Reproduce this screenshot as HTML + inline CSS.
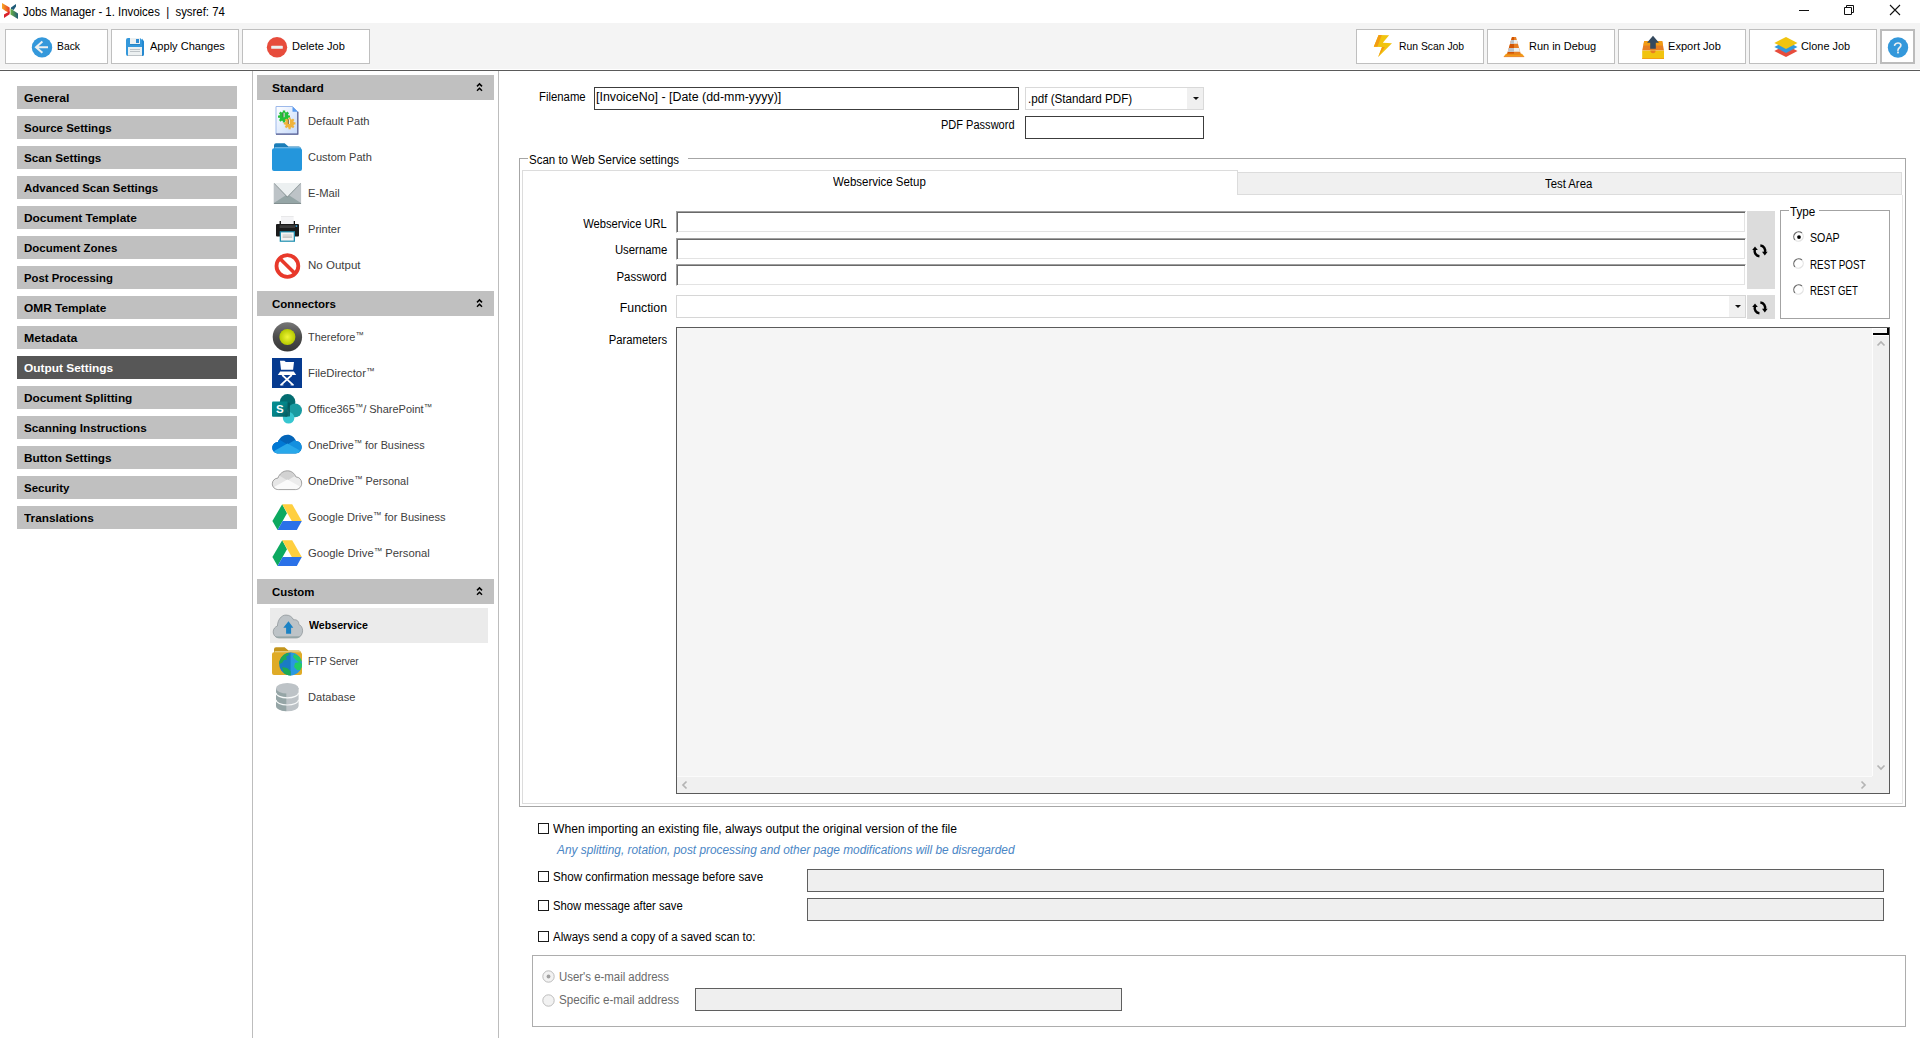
<!DOCTYPE html>
<html lang="en"><head><meta charset="utf-8"><title>Jobs Manager - 1. Invoices | sysref: 74</title>
<style>
html,body{margin:0;padding:0;background:#fff;}
body{width:1920px;height:1040px;position:relative;overflow:hidden;font-family:"Liberation Sans",sans-serif;font-size:11.5px;}
div,svg,span.t{position:absolute;box-sizing:border-box;}
span.t{white-space:pre;line-height:16px;}
svg{overflow:visible;}
span.tm{font-size:0.76em;vertical-align:0.36em;line-height:0;}
</style></head>
<body>
<div style="left:0px;top:23px;width:1920px;height:46px;background:#f4f4f4;"></div>
<div style="left:0px;top:70px;width:1920px;height:1px;background:#5a5a5a;"></div>
<svg style="left:2px;top:3px;width:17px;height:16px" viewBox="0 0 17 16">
<defs><linearGradient id="ga1" x1="0" x2="1" y1="0" y2="0"><stop offset="0" stop-color="#f9a825"/><stop offset="1" stop-color="#e53a24"/></linearGradient>
<linearGradient id="ga2" x1="0" x2="1" y1="0" y2="0"><stop offset="0" stop-color="#6ab344"/><stop offset="1" stop-color="#1f5a73"/></linearGradient></defs>
<polygon points="0,0 7.6,4.5 7.6,10 3.5,8 0,5.5" fill="url(#ga1)"/>
<polygon points="2,11.5 7.6,8.2 7.6,11.2 2,15" fill="#d9202a"/>
<polygon points="9,4.6 14,1 14,3.6 11.6,7 9,6" fill="#1d5a78"/>
<polygon points="8.5,5.5 16,10.5 16,16 8.5,11.5" fill="url(#ga2)"/>
</svg>
<span id="t0" class="t" style="top:4px;font-size:12px;left:22.86px;transform:scaleX(0.9497);transform-origin:0 50%;">Jobs Manager - 1. Invoices  |  sysref: 74</span>
<svg style="left:1790px;top:0px;width:120px;height:22px" viewBox="0 0 120 22">
<path d="M9 10.5H19" stroke="#111" stroke-width="1" fill="none"/>
<path d="M54.5 7.5h7v7h-7z M56.5 7.5v-2h7v7h-2" stroke="#111" stroke-width="1" fill="none"/>
<path d="M100 5l10 10M110 5l-10 10" stroke="#111" stroke-width="1.1" fill="none"/>
</svg>
<div style="left:5px;top:29px;width:103px;height:35px;background:#fff;border:1px solid #bfbfbf;"></div>
<svg style="left:32px;top:37px;width:20px;height:21px" viewBox="0 0 20 21">
<circle cx="10" cy="10.4" r="10.2" fill="#3498db"/>
<path d="M16 10.2H4.2M10.4 4.6L4 10.2l6.4 5.6" stroke="#ecf0f1" stroke-width="2" fill="none" stroke-linejoin="miter"/>
</svg>
<span id="t1" class="t" style="top:38px;left:56.54px;transform:scaleX(0.8988);transform-origin:0 50%;">Back</span>
<div style="left:111px;top:29px;width:128px;height:35px;background:#fff;border:1px solid #bfbfbf;"></div>
<svg style="left:126px;top:38px;width:18px;height:18px" viewBox="0 0 18 18">
<path d="M2 0H14L18 3.6V16a2 2 0 0 1-2 2H2a2 2 0 0 1-2-2V2a2 2 0 0 1 2-2z" fill="#3498db"/>
<path d="M16 0.5L18 3.6V16a2 2 0 0 1-2 2z" fill="#2488d0"/>
<rect x="4" y="0" width="10" height="6" fill="#ecf0f1"/>
<rect x="4" y="6" width="10" height="0.8" fill="#2a80b9"/>
<rect x="10" y="1" width="3" height="4" fill="#2e8bd2"/>
<rect x="2" y="9" width="14" height="9" fill="#ecf0f1"/>
<rect x="2" y="17" width="14" height="1" fill="#bdc3c7"/>
<rect x="4" y="11" width="10" height="1" fill="#bdc3c7"/>
<rect x="4" y="13" width="10" height="1" fill="#bdc3c7"/>
</svg>
<span id="t2" class="t" style="top:38px;left:149.86px;transform:scaleX(0.9601);transform-origin:0 50%;">Apply Changes</span>
<div style="left:242px;top:29px;width:128px;height:35px;background:#fff;border:1px solid #bfbfbf;"></div>
<svg style="left:267px;top:37px;width:20px;height:21px" viewBox="0 0 20 21">
<circle cx="10" cy="10.3" r="10.2" fill="#e74c3c"/>
<rect x="4.2" y="8.8" width="11.6" height="3" rx="0.6" fill="#ecf0f1"/>
</svg>
<span id="t3" class="t" style="top:38px;left:291.88px;transform:scaleX(0.9598);transform-origin:0 50%;">Delete Job</span>
<div style="left:1356px;top:29px;width:128px;height:35px;background:#fff;border:1px solid #bfbfbf;"></div>
<svg style="left:1373px;top:35px;width:19px;height:22px" viewBox="0 0 19 22">
<polygon points="5.6,0.1 16.1,0.2 9.8,7.8 19,8.2 5.2,22.1 9,11.9 0.8,11.8" fill="#f1c40f"/>
<polygon points="5.6,0.1 8.8,0.1 4.4,11.8 0.8,11.8" fill="#f39c12"/>
<polygon points="9,11.9 11.8,11.9 5.2,22.1" fill="#f39c12"/>
</svg>
<span id="t4" class="t" style="top:38px;left:1398.73px;transform:scaleX(0.9010);transform-origin:0 50%;">Run Scan Job</span>
<div style="left:1487px;top:29px;width:128px;height:35px;background:#fff;border:1px solid #bfbfbf;"></div>
<svg style="left:1503px;top:36px;width:22px;height:22px" viewBox="0 0 22 22">
<polygon points="9,0.9 13,0.9 18,18.8 4,18.8" fill="#e67e22"/>
<polygon points="9,0.9 11,0.9 11,18.8 4,18.8" fill="#d35400"/>
<polygon points="8.1,4 13.9,4 14.9,7.8 7.1,7.8" fill="#ecf0f1"/>
<polygon points="8.1,4 11,4 11,7.8 7.1,7.8" fill="#bdc3c7"/>
<polygon points="5.9,12 16.1,12 17.1,15.8 4.9,15.8" fill="#ecf0f1"/>
<polygon points="5.9,12 11,12 11,15.8 4.9,15.8" fill="#bdc3c7"/>
<polygon points="3,17.8 19,17.8 21.2,20.6 0.8,20.6" fill="#f39c12"/>
<polygon points="3.9,17.8 18.1,17.8 17.9,18.8 4.1,18.8" fill="#e67e22"/>
<rect x="0.8" y="20.2" width="20.4" height="0.9" fill="#e67e22"/>
</svg>
<span id="t5" class="t" style="top:38px;left:1528.88px;transform:scaleX(0.9541);transform-origin:0 50%;">Run in Debug</span>
<div style="left:1618px;top:29px;width:128px;height:35px;background:#fff;border:1px solid #bfbfbf;"></div>
<svg style="left:1641px;top:35px;width:24px;height:24px" viewBox="0 0 24 24">
<polygon points="3.2,5.9 21.2,5.9 23,15.6 1.2,15.6" fill="#e67e22"/>
<polygon points="3.2,5.9 21.2,5.9 22,10.4 2.4,10.4" fill="#f39c12"/>
<rect x="1.2" y="15.6" width="21.8" height="8.3" fill="#f1c40f"/>
<rect x="1.2" y="23" width="21.8" height="0.9" fill="#f39c12"/>
<path d="M9.4 15.6a2.6 2.6 0 0 0 5.2 0z" fill="#e67e22"/>
<polygon points="12,0.7 18,7.8 14.8,7.8 14.8,13.8 9.2,13.8 9.2,7.8 6,7.8" fill="#34495e"/>
</svg>
<span id="t6" class="t" style="top:38px;left:1667.68px;transform:scaleX(0.9616);transform-origin:0 50%;">Export Job</span>
<div style="left:1749px;top:29px;width:128px;height:35px;background:#fff;border:1px solid #bfbfbf;"></div>
<svg style="left:1774px;top:36px;width:24px;height:22px" viewBox="0 0 24 22">
<polygon points="12,9 23.5,15 12,21 0.3,15" fill="#e74c3c"/>
<polygon points="12,4.9 23.5,10.9 12,16.9 0.3,10.9" fill="#3498db"/>
<polygon points="12,0.9 23.5,6.9 12,12.9 0.3,6.9" fill="#f1c40f"/>
</svg>
<span id="t7" class="t" style="top:38px;left:1800.86px;transform:scaleX(0.9478);transform-origin:0 50%;">Clone Job</span>
<div style="left:1880px;top:29px;width:35px;height:35px;background:#fff;border:2px solid #bcbcbc;"></div>
<svg style="left:1888px;top:37px;width:20px;height:21px" viewBox="0 0 20 21">
<circle cx="10" cy="10.5" r="10.2" fill="#3498db"/>
<path d="M6.6 8.1c0.9-2.6 5.6-3 6.3-0.1c0.4 2.2-2.8 3-2.9 5.2" stroke="#ecf0f1" stroke-width="1.7" fill="none" stroke-linecap="round"/>
<rect x="9.1" y="14.5" width="1.8" height="1.9" fill="#ecf0f1"/>
</svg>
<div style="left:17px;top:86px;width:220px;height:23px;background:#c0c0c0;"></div>
<span id="t8" class="t" style="top:90px;font-weight:700;left:23.69px;transform:scaleX(1.0612);transform-origin:0 50%;">General</span>
<div style="left:17px;top:116px;width:220px;height:23px;background:#c0c0c0;"></div>
<span id="t9" class="t" style="top:120px;font-weight:700;left:24.00px;transform:scaleX(1.0000);transform-origin:0 50%;">Source Settings</span>
<div style="left:17px;top:146px;width:220px;height:23px;background:#c0c0c0;"></div>
<span id="t10" class="t" style="top:150px;font-weight:700;left:23.85px;transform:scaleX(1.0172);transform-origin:0 50%;">Scan Settings</span>
<div style="left:17px;top:176px;width:220px;height:23px;background:#c0c0c0;"></div>
<span id="t11" class="t" style="top:180px;font-weight:700;left:24.00px;transform:scaleX(1.0000);transform-origin:0 50%;">Advanced Scan Settings</span>
<div style="left:17px;top:206px;width:220px;height:23px;background:#c0c0c0;"></div>
<span id="t12" class="t" style="top:210px;font-weight:700;left:23.84px;transform:scaleX(1.0350);transform-origin:0 50%;">Document Template</span>
<div style="left:17px;top:236px;width:220px;height:23px;background:#c0c0c0;"></div>
<span id="t13" class="t" style="top:240px;font-weight:700;left:24.00px;transform:scaleX(1.0000);transform-origin:0 50%;">Document Zones</span>
<div style="left:17px;top:266px;width:220px;height:23px;background:#c0c0c0;"></div>
<span id="t14" class="t" style="top:270px;font-weight:700;left:23.85px;transform:scaleX(0.9855);transform-origin:0 50%;">Post Processing</span>
<div style="left:17px;top:296px;width:220px;height:23px;background:#c0c0c0;"></div>
<span id="t15" class="t" style="top:300px;font-weight:700;left:23.84px;transform:scaleX(1.0339);transform-origin:0 50%;">OMR Template</span>
<div style="left:17px;top:326px;width:220px;height:23px;background:#c0c0c0;"></div>
<span id="t16" class="t" style="top:330px;font-weight:700;left:23.84px;transform:scaleX(1.0710);transform-origin:0 50%;">Metadata</span>
<div style="left:17px;top:356px;width:220px;height:23px;background:#575757;"></div>
<span id="t17" class="t" style="top:360px;color:#fff;font-weight:700;left:23.61px;transform:scaleX(1.0346);transform-origin:0 50%;">Output Settings</span>
<div style="left:17px;top:386px;width:220px;height:23px;background:#c0c0c0;"></div>
<span id="t18" class="t" style="top:390px;font-weight:700;left:23.85px;transform:scaleX(1.0277);transform-origin:0 50%;">Document Splitting</span>
<div style="left:17px;top:416px;width:220px;height:23px;background:#c0c0c0;"></div>
<span id="t19" class="t" style="top:420px;font-weight:700;left:23.85px;transform:scaleX(1.0157);transform-origin:0 50%;">Scanning Instructions</span>
<div style="left:17px;top:446px;width:220px;height:23px;background:#c0c0c0;"></div>
<span id="t20" class="t" style="top:450px;font-weight:700;left:23.85px;transform:scaleX(1.0233);transform-origin:0 50%;">Button Settings</span>
<div style="left:17px;top:476px;width:220px;height:23px;background:#c0c0c0;"></div>
<span id="t21" class="t" style="top:480px;font-weight:700;left:24.00px;transform:scaleX(1.0000);transform-origin:0 50%;">Security</span>
<div style="left:17px;top:506px;width:220px;height:23px;background:#c0c0c0;"></div>
<span id="t22" class="t" style="top:510px;font-weight:700;left:23.85px;transform:scaleX(1.0295);transform-origin:0 50%;">Translations</span>
<div style="left:252px;top:71px;width:1px;height:967px;background:#bdbdbd;"></div>
<div style="left:498px;top:71px;width:1px;height:967px;background:#bdbdbd;"></div>
<div style="left:257px;top:75px;width:237px;height:25px;background:#c0c0c0;"></div>
<span id="t23" class="t" style="top:80px;font-weight:700;left:271.84px;transform:scaleX(1.0412);transform-origin:0 50%;">Standard</span>
<svg style="left:476px;top:83px;width:7px;height:9px" viewBox="0 0 7 9">
<path d="M1 3.4L3.5 0.9L6 3.4M1 7.7L3.5 5.2L6 7.7" stroke="#000" stroke-width="1.5" fill="none"/>
</svg>
<div style="left:257px;top:291px;width:237px;height:25px;background:#c0c0c0;"></div>
<span id="t24" class="t" style="top:296px;font-weight:700;left:272.00px;transform:scaleX(1.0000);transform-origin:0 50%;">Connectors</span>
<svg style="left:476px;top:299px;width:7px;height:9px" viewBox="0 0 7 9">
<path d="M1 3.4L3.5 0.9L6 3.4M1 7.7L3.5 5.2L6 7.7" stroke="#000" stroke-width="1.5" fill="none"/>
</svg>
<div style="left:257px;top:579px;width:237px;height:25px;background:#c0c0c0;"></div>
<span id="t25" class="t" style="top:584px;font-weight:700;left:271.85px;transform:scaleX(0.9906);transform-origin:0 50%;">Custom</span>
<svg style="left:476px;top:587px;width:7px;height:9px" viewBox="0 0 7 9">
<path d="M1 3.4L3.5 0.9L6 3.4M1 7.7L3.5 5.2L6 7.7" stroke="#000" stroke-width="1.5" fill="none"/>
</svg>
<svg style="left:275px;top:106px;width:24px;height:29px" viewBox="0 0 24 29">
<defs><linearGradient id="gp" x1="0" y1="0" x2="1" y2="1"><stop offset="0" stop-color="#ffffff"/><stop offset="1" stop-color="#c4d9fb"/></linearGradient></defs>
<path d="M1 0.5H17.5L22.8 5.8V28.2H1z" fill="url(#gp)" stroke="#9db9ea" stroke-width="1"/>
<path d="M22.8 5.8V28.2H1" fill="none" stroke="#5a5f8f" stroke-width="1.2"/>
<path d="M17.5 0.5v5.3h5.3z" fill="#5b9cf0"/>
<circle cx="9" cy="10.6" r="4.6" fill="#22c238"/>
<path d="M9 4.6v12M3 10.6h12M4.8 6.4l8.4 8.4M13.2 6.4l-8.4 8.4" stroke="#22c238" stroke-width="2.4"/>
<circle cx="14.6" cy="17.4" r="4.4" fill="#f0b33c"/>
<path d="M14.6 11.6v11.6M8.8 17.4h11.6M10.5 13.3l8.2 8.2M18.7 13.3l-8.2 8.2" stroke="#f0b33c" stroke-width="2.2"/>
<rect x="8.3" y="6.8" width="1.3" height="4.4" fill="#e8e8e8"/>
<rect x="13.6" y="13.4" width="1.4" height="4.6" fill="#e8e8e8"/>
<rect x="7.6" y="6.8" width="0.8" height="4.4" fill="#4d5a4d"/>
<rect x="12.9" y="13.4" width="0.8" height="4.6" fill="#6b5a3a"/>
</svg>
<span id="t26" class="t" style="top:113px;color:#404040;left:308.12px;transform:scaleX(0.9710);transform-origin:0 50%;">Default Path</span>
<svg style="left:272px;top:143px;width:30px;height:28px" viewBox="0 0 30 28">
<path d="M2 2.2a2 2 0 0 1 2-2h8.6l3.8 3.2h10.4a2 2 0 0 1 2 2v6H2z" fill="#1b7db8"/>
<rect x="2.6" y="4.2" width="25.6" height="2" fill="#7fc0ea"/>
<path d="M0 7.2a2 2 0 0 1 2-2h26a2 2 0 0 1 2 2v18.8a2 2 0 0 1-2 2H2a2 2 0 0 1-2-2z" fill="#2496dc"/>
</svg>
<span id="t27" class="t" style="top:149px;color:#404040;left:308.44px;transform:scaleX(0.9595);transform-origin:0 50%;">Custom Path</span>
<svg style="left:273px;top:182px;width:29px;height:23px" viewBox="0 0 29 23">
<rect x="0.7" y="1.1" width="27.4" height="20.7" rx="1" fill="#bdc3c7"/>
<polygon points="0.9,21 14.4,12.2 27.9,21 27.9,21.8 0.9,21.8" fill="#95a5a6"/>
<polygon points="0.7,1.3 28.1,1.3 14.4,15.4" fill="#7f8c8d"/>
<polygon points="1.2,1.1 27.6,1.1 14.4,14.4" fill="#ecf0f1"/>
<rect x="0.9" y="21" width="27.2" height="0.9" fill="#7f8c8d"/>
</svg>
<span id="t28" class="t" style="top:185px;color:#404040;left:308.10px;transform:scaleX(0.9756);transform-origin:0 50%;">E-Mail</span>
<svg style="left:275px;top:215px;width:24px;height:28px" viewBox="0 0 24 28">
<rect x="6" y="1.2" width="12.6" height="8.5" fill="#f4f4f6"/>
<rect x="6" y="1.2" width="12.6" height="0.7" fill="#e2e2e2"/>
<rect x="4.6" y="6" width="1.3" height="3.5" fill="#111"/>
<rect x="18.7" y="6" width="1.3" height="3.5" fill="#111"/>
<rect x="1" y="9" width="23" height="12.5" rx="1" fill="#1b1b1b"/>
<rect x="4.6" y="10.2" width="15.4" height="2.8" fill="#3b3b3b"/>
<rect x="20.6" y="10.3" width="1.6" height="1.6" fill="#3aa5e0"/>
<rect x="4.7" y="16.2" width="15.3" height="10.6" fill="#1e8fb0"/>
<rect x="6" y="17.4" width="12.7" height="8.2" fill="#f6f4f2"/>
<rect x="7.6" y="19.6" width="9.6" height="0.9" fill="#bdbdbd"/>
<rect x="7.6" y="21.6" width="9.6" height="0.9" fill="#9c9c9c"/>
</svg>
<span id="t29" class="t" style="top:221px;color:#404040;left:308.20px;transform:scaleX(0.9624);transform-origin:0 50%;">Printer</span>
<svg style="left:274px;top:252px;width:27px;height:28px" viewBox="0 0 27 28">
<circle cx="13.4" cy="14" r="10.9" fill="#fff" stroke="#e8392b" stroke-width="3.8"/>
<path d="M5.8 6.4L21 21.6" stroke="#e8392b" stroke-width="3.6"/>
</svg>
<span id="t30" class="t" style="top:257px;color:#404040;left:308.07px;transform:scaleX(1.0020);transform-origin:0 50%;">No Output</span>
<svg style="left:272px;top:322px;width:30px;height:30px" viewBox="0 0 30 30">
<defs><linearGradient id="gt" x1="0" y1="0" x2="0" y2="1"><stop offset="0" stop-color="#777"/><stop offset="0.5" stop-color="#4c4c4c"/><stop offset="1" stop-color="#363636"/></linearGradient>
<radialGradient id="gy" cx="0.5" cy="0.5" r="0.5"><stop offset="0" stop-color="#f0f538"/><stop offset="1" stop-color="#b4c800"/></radialGradient></defs>
<circle cx="15.4" cy="14.9" r="14.7" fill="url(#gt)"/>
<circle cx="15.4" cy="15" r="8" fill="url(#gy)"/>
</svg>
<span id="t31" class="t" style="top:329px;color:#404040;left:308.44px;transform:scaleX(0.9506);transform-origin:0 50%;">Therefore<span class=tm>&#8482;</span></span>
<svg style="left:272px;top:358px;width:30px;height:30px" viewBox="0 0 30 30">
<rect x="0" y="0" width="30" height="30" fill="#063a8f"/>
<path d="M8 2.7h4.4l1.4 1.4H22l-0.9 7.6H9z" fill="#fff"/>
<polygon points="8.2,13.4 21.8,13.4 24.2,16.9 5.8,16.9" fill="#fff"/>
<path d="M10.2 17L21 26.9M19.8 17L9 26.9" stroke="#fff" stroke-width="1.7"/>
<path d="M8 26.9h3.4M18.6 26.9H22" stroke="#fff" stroke-width="1"/>
</svg>
<span id="t32" class="t" style="top:365px;color:#404040;left:308.10px;transform:scaleX(0.9850);transform-origin:0 50%;">FileDirector<span class=tm>&#8482;</span></span>
<svg style="left:272px;top:394px;width:30px;height:30px" viewBox="0 0 30 30">
<defs><linearGradient id="gs" x1="0" y1="0" x2="1" y2="1"><stop offset="0" stop-color="#058f92"/><stop offset="0.5" stop-color="#038387"/><stop offset="1" stop-color="#05575b"/></linearGradient></defs>
<circle cx="15.6" cy="7.9" r="7.8" fill="#036c70"/>
<circle cx="23.1" cy="16.3" r="6.9" fill="#1a9ba1"/>
<circle cx="16.6" cy="23.8" r="5.8" fill="#37c6d0"/>
<rect x="13" y="8.4" width="5" height="14.2" rx="1.2" fill="#04575b" opacity="0.85"/>
<rect x="0" y="7.4" width="15.6" height="15.4" rx="1" fill="url(#gs)"/>
<text x="7.8" y="19.2" font-family="Liberation Sans, sans-serif" font-weight="700" font-size="11.5" fill="#fff" text-anchor="middle">S</text>
</svg>
<span id="t33" class="t" style="top:401px;color:#404040;left:308.44px;transform:scaleX(0.9553);transform-origin:0 50%;">Office365<span class=tm>&#8482;</span>/ SharePoint<span class=tm>&#8482;</span></span>
<svg style="left:272px;top:434px;width:30px;height:21px" viewBox="0 0 30 21">
<clipPath id="cc0364b8"><path d="M6.6 19.6C2.8 19.6 0.3 17 0.3 13.8c0-3.2 2.6-5.6 5.6-5.7C7.4 3.9 11 0.8 15.4 0.8c3.9 0 7.2 2.5 8.5 6.1c3.3 0.1 5.8 2.8 5.8 6.2c0 3.6-2.7 6.5-6.3 6.5z"/></clipPath>
<g clip-path="url(#cc0364b8)">
<rect x="0" y="0" width="30" height="21" fill="#0364b8"/>
<polygon points="0,4 8,6 18,12 0,21" fill="#0078d4"/>
<polygon points="30,5 22,6.5 12,12.5 30,21" fill="#1490df"/>
<polygon points="0,20.5 3,16.5 15.4,9.6 27,16 30,21 0,21" fill="#28a8ea"/>
</g>
<path d="M6.6 19.6C2.8 19.6 0.3 17 0.3 13.8c0-3.2 2.6-5.6 5.6-5.7C7.4 3.9 11 0.8 15.4 0.8c3.9 0 7.2 2.5 8.5 6.1c3.3 0.1 5.8 2.8 5.8 6.2c0 3.6-2.7 6.5-6.3 6.5z" fill="none"/>
</svg>
<span id="t34" class="t" style="top:437px;color:#404040;left:308.44px;transform:scaleX(0.9418);transform-origin:0 50%;">OneDrive<span class=tm>&#8482;</span> for Business</span>
<svg style="left:272px;top:470px;width:30px;height:21px" viewBox="0 0 30 21">
<clipPath id="ccd2d2d2"><path d="M6.6 19.6C2.8 19.6 0.3 17 0.3 13.8c0-3.2 2.6-5.6 5.6-5.7C7.4 3.9 11 0.8 15.4 0.8c3.9 0 7.2 2.5 8.5 6.1c3.3 0.1 5.8 2.8 5.8 6.2c0 3.6-2.7 6.5-6.3 6.5z"/></clipPath>
<g clip-path="url(#ccd2d2d2)">
<rect x="0" y="0" width="30" height="21" fill="#d2d2d2"/>
<polygon points="0,4 8,6 18,12 0,21" fill="#e6e6e6"/>
<polygon points="30,5 22,6.5 12,12.5 30,21" fill="#ececec"/>
<polygon points="0,20.5 3,16.5 15.4,9.6 27,16 30,21 0,21" fill="#fafafa"/>
</g>
<path d="M6.6 19.6C2.8 19.6 0.3 17 0.3 13.8c0-3.2 2.6-5.6 5.6-5.7C7.4 3.9 11 0.8 15.4 0.8c3.9 0 7.2 2.5 8.5 6.1c3.3 0.1 5.8 2.8 5.8 6.2c0 3.6-2.7 6.5-6.3 6.5z" fill="none" stroke="#8e8e8e" stroke-width="0.8"/>
</svg>
<span id="t35" class="t" style="top:473px;color:#404040;left:308.09px;transform:scaleX(0.9499);transform-origin:0 50%;">OneDrive<span class=tm>&#8482;</span> Personal</span>
<svg style="left:272px;top:504px;width:30px;height:27px" viewBox="0 0 30 27">
<polygon points="10.2,0.3 15,9.2 5.6,26 0.4,17" fill="#0da960"/>
<polygon points="10.2,0.3 20.2,0.3 29.8,17 19.8,17" fill="#ffcf3f"/>
<polygon points="10.6,17 29.8,17 24.8,26 5.6,26" fill="#2a71e8"/>
</svg>
<span id="t36" class="t" style="top:509px;color:#404040;left:308.09px;transform:scaleX(0.9665);transform-origin:0 50%;">Google Drive<span class=tm>&#8482;</span> for Business</span>
<svg style="left:272px;top:540px;width:30px;height:27px" viewBox="0 0 30 27">
<polygon points="10.2,0.3 15,9.2 5.6,26 0.4,17" fill="#0da960"/>
<polygon points="10.2,0.3 20.2,0.3 29.8,17 19.8,17" fill="#ffcf3f"/>
<polygon points="10.6,17 29.8,17 24.8,26 5.6,26" fill="#2a71e8"/>
</svg>
<span id="t37" class="t" style="top:545px;color:#404040;left:308.09px;transform:scaleX(0.9784);transform-origin:0 50%;">Google Drive<span class=tm>&#8482;</span> Personal</span>
<div style="left:270px;top:608px;width:218px;height:35px;background:#ebebeb;"></div>
<svg style="left:273px;top:614px;width:30px;height:25px" viewBox="0 0 30 25">
<path d="M6.6 24C2.8 24 0.2 21.2 0.2 17.8c0-2.8 1.8-5 4.2-5.8C4.6 6 8.2 1 13 1c3.4 0 6.2 1.8 7.6 4.8c3.4-0.6 5.4 1.6 5.2 4.6c2.4 1 3.8 3.4 3.8 6.2c0 4.2-2.8 7.4-6.6 7.4z" fill="#bdc3c7" stroke="#6c7478" stroke-width="0.5"/>
<path d="M2.2 22.4c1.2 1 2.6 1.6 4.4 1.6H23c1.800 0 3.400-0.700 4.600-1.800z" fill="#95a5a6"/>
<polygon points="15.5,7.3 20.3,13.7 18.100,13.7 18.100,19.800 13.100,19.800 13.100,13.7 10.3,13.7" fill="#1b82c4"/>
</svg>
<span id="t38" class="t" style="top:617px;font-weight:700;left:309.25px;transform:scaleX(0.9246);transform-origin:0 50%;">Webservice</span>
<svg style="left:272px;top:647px;width:30px;height:29px" viewBox="0 0 30 29">
<path d="M2 2.2a2 2 0 0 1 2-2h8.6l3.8 3.2h10.4a2 2 0 0 1 2 2v6H2z" fill="#c4951c"/>
<rect x="2.6" y="4.2" width="25.6" height="2" fill="#ecd591"/>
<path d="M0 7.2a2 2 0 0 1 2-2h26a2 2 0 0 1 2 2v18.8a2 2 0 0 1-2 2H2a2 2 0 0 1-2-2z" fill="#dfab27"/>

<clipPath id="gl"><circle cx="18.6" cy="17" r="11.4"/></clipPath>
<g clip-path="url(#gl)">
<rect x="7" y="5" width="12.400" height="24" fill="#1a7bc5"/>
<rect x="18.6" y="5" width="12" height="24" fill="#2a98e0"/>
<path d="M7 13l4-5 5-2.600 1 2.600-3 1.500 1 3-3 0.500-2 3-3 1z" fill="#1cab55"/>
<path d="M10 20l5 1 3.600 3v5h-6z" fill="#1cab55"/>
<path d="M22 7l6 3 2 4-3 1-3-2-3-3z" fill="#22cc66"/>
<path d="M23 16l5-1 3 3-2 5-4 0-3-3z" fill="#22cc66"/>
</g>
</svg>
<span id="t39" class="t" style="top:653px;color:#404040;left:307.71px;transform:scaleX(0.8651);transform-origin:0 50%;">FTP Server</span>
<svg style="left:275px;top:683px;width:24px;height:29px" viewBox="0 0 24 29">
<path d="M1 5.3v17.7a11.3 5.2 0 0 0 22.6 0V5.3z" fill="#bdc3c7"/>
<path d="M1 5.3v17.7a11.3 5.2 0 0 0 10.3 5.150V5.3z" fill="#95a5a6"/>
<path d="M1 9.700a11.3 5.2 0 0 0 22.6 0" fill="none" stroke="#f7f9f9" stroke-width="1.200"/>
<path d="M1 16.800a11.3 5.2 0 0 0 22.6 0" fill="none" stroke="#f7f9f9" stroke-width="1.200"/>
<ellipse cx="12.3" cy="5.300" rx="11.300" ry="5.200" fill="#bdc3c7"/>
</svg>
<span id="t40" class="t" style="top:689px;color:#404040;left:308.11px;transform:scaleX(0.9635);transform-origin:0 50%;">Database</span>
<span id="t41" class="t" style="top:89px;font-size:12px;left:538.86px;transform:scaleX(0.9457);transform-origin:0 50%;">Filename</span>
<div style="left:594px;top:87px;width:425px;height:23px;background:#fff;border:1px solid #3c3c3c;"></div>
<span id="t42" class="t" style="top:89px;font-size:12px;left:596.05px;transform:scaleX(1.0326);transform-origin:0 50%;">[InvoiceNo] - [Date (dd-mm-yyyy)]</span>
<div style="left:1025px;top:87px;width:179px;height:23px;background:#fff;border:1px solid #d9d9d9;"></div>
<div style="left:1187px;top:88px;width:16px;height:21px;background:#f0f0f0;"></div>
<svg style="left:1192.5px;top:97.2px;width:6px;height:3px" viewBox="0 0 6 3"><polygon points="0,0 6,0 3,3" fill="#111"/></svg>
<span id="t43" class="t" style="top:91px;font-size:12px;left:1027.88px;transform:scaleX(0.9707);transform-origin:0 50%;">.pdf (Standard PDF)</span>
<span id="t44" class="t" style="top:117px;font-size:12px;left:940.67px;transform:scaleX(0.9189);transform-origin:0 50%;">PDF Password</span>
<div style="left:1025px;top:116px;width:179px;height:23px;background:#fff;border:1px solid #3c3c3c;"></div>
<div style="left:519px;top:158px;width:1387px;height:649px;border:1px solid #a6a6a6;"></div>
<div style="left:528px;top:156px;width:160px;height:5px;background:#fff;"></div>
<span id="t45" class="t" style="top:152px;font-size:12px;left:529.11px;transform:scaleX(0.9589);transform-origin:0 50%;">Scan to Web Service settings</span>
<div style="left:522px;top:170px;width:1381px;height:634px;border:1px solid #dcdcdc;border-top:none;border-right:none;"></div>
<div style="left:1902px;top:195px;width:1px;height:609px;background:#e6e6e6;"></div>
<div style="left:522px;top:170px;width:716px;height:1px;background:#dcdcdc;"></div>
<div style="left:1237px;top:170px;width:1px;height:3px;background:#dcdcdc;"></div>
<div style="left:1237px;top:172px;width:665px;height:23px;background:#f0f0f0;border:1px solid #dcdcdc;"></div>
<span id="t46" class="t" style="top:174px;font-size:12px;left:832.71px;transform:scaleX(0.9546);transform-origin:0 50%;">Webservice Setup</span>
<span id="t47" class="t" style="top:176px;font-size:12px;left:1544.71px;transform:scaleX(0.9440);transform-origin:0 50%;">Test Area</span>
<div style="left:676px;top:211px;width:1070px;height:22px;background:#fff;border:1px solid #fff;border-top-color:#a0a0a0;border-left-color:#a0a0a0;box-shadow:inset 1px 1px 0 #696969, inset -1px -1px 0 #e3e3e3;"></div>
<span id="t48" class="t" style="top:216px;font-size:12px;right:1253.25px;transform:scaleX(0.9309);transform-origin:100% 50%;">Webservice URL</span>
<div style="left:676px;top:238px;width:1070px;height:22px;background:#fff;border:1px solid #fff;border-top-color:#a0a0a0;border-left-color:#a0a0a0;box-shadow:inset 1px 1px 0 #696969, inset -1px -1px 0 #e3e3e3;"></div>
<span id="t49" class="t" style="top:242px;font-size:12px;right:1252.91px;transform:scaleX(0.9480);transform-origin:100% 50%;">Username</span>
<div style="left:676px;top:264px;width:1070px;height:22px;background:#fff;border:1px solid #fff;border-top-color:#a0a0a0;border-left-color:#a0a0a0;box-shadow:inset 1px 1px 0 #696969, inset -1px -1px 0 #e3e3e3;"></div>
<span id="t50" class="t" style="top:269px;font-size:12px;right:1253.25px;transform:scaleX(0.9536);transform-origin:100% 50%;">Password</span>
<span id="t51" class="t" style="top:300px;font-size:12px;right:1253.30px;transform:scaleX(1.0264);transform-origin:100% 50%;">Function</span>
<div style="left:676px;top:295px;width:1070px;height:23px;background:#fff;border:1px solid #d6d6d6;"></div>
<div style="left:1729px;top:296px;width:16px;height:21px;background:#f0f0f0;"></div>
<svg style="left:1734.5px;top:305px;width:6px;height:3.2px" viewBox="0 0 6 3"><polygon points="0,0 6,0 3,3" fill="#111"/></svg>
<div style="left:1747px;top:211px;width:28px;height:78px;background:#dcdcdc;"></div>
<div style="left:1747px;top:295px;width:28px;height:24px;background:#dcdcdc;"></div>
<svg style="left:1753px;top:244px;width:14px;height:14px" viewBox="0 0 14 14">
<path d="M7.350 1.500A5.200 5.200 0 0 1 11.900 8.200" stroke="#000" stroke-width="2.400" fill="none"/>
<polygon points="9,7.700 14.600,7.700 11.800,11.400" fill="#000"/>
<path d="M6.450 12.300A5.200 5.200 0 0 1 1.900 5.600" stroke="#000" stroke-width="2.400" fill="none"/>
<polygon points="4.800,6.100 -0.800,6.100 2,2.400" fill="#000"/>
</svg>
<svg style="left:1753px;top:301px;width:14px;height:14px" viewBox="0 0 14 14">
<path d="M7.350 1.500A5.200 5.200 0 0 1 11.900 8.200" stroke="#000" stroke-width="2.400" fill="none"/>
<polygon points="9,7.700 14.600,7.700 11.800,11.400" fill="#000"/>
<path d="M6.450 12.300A5.200 5.200 0 0 1 1.900 5.600" stroke="#000" stroke-width="2.400" fill="none"/>
<polygon points="4.800,6.100 -0.800,6.100 2,2.400" fill="#000"/>
</svg>
<div style="left:1780px;top:210px;width:110px;height:109px;border:1px solid #a3a3a3;"></div>
<div style="left:1789px;top:208px;width:30px;height:5px;background:#fff;"></div>
<span id="t52" class="t" style="top:204px;font-size:12px;left:1789.85px;transform:scaleX(0.9728);transform-origin:0 50%;">Type</span>
<svg style="left:1792px;top:229.9px;width:13px;height:13px" viewBox="0 0 13 13">
<circle cx="6.5" cy="6.500" r="4.800" fill="#fff"/>
<path d="M3.040 9.960A4.900 4.900 0 0 1 9.960 3.040" stroke="#6a6a6a" stroke-width="1.200" fill="none"/>
<path d="M9.960 3.040A4.900 4.900 0 0 1 3.040 9.960" stroke="#e3e3e3" stroke-width="1.200" fill="none"/>
<circle cx="7" cy="7.100" r="1.900" fill="#000"/></svg>
<span id="t53" class="t" style="top:230px;font-size:12px;left:1809.74px;transform:scaleX(0.8869);transform-origin:0 50%;">SOAP</span>
<svg style="left:1792px;top:256.9px;width:13px;height:13px" viewBox="0 0 13 13">
<circle cx="6.5" cy="6.500" r="4.800" fill="#fff"/>
<path d="M3.040 9.960A4.900 4.900 0 0 1 9.960 3.040" stroke="#6a6a6a" stroke-width="1.200" fill="none"/>
<path d="M9.960 3.040A4.900 4.900 0 0 1 3.040 9.960" stroke="#e3e3e3" stroke-width="1.200" fill="none"/>
</svg>
<span id="t54" class="t" style="top:257px;font-size:12px;left:1810.03px;transform:scaleX(0.8174);transform-origin:0 50%;">REST POST</span>
<svg style="left:1792px;top:282.9px;width:13px;height:13px" viewBox="0 0 13 13">
<circle cx="6.5" cy="6.500" r="4.800" fill="#fff"/>
<path d="M3.040 9.960A4.900 4.900 0 0 1 9.960 3.040" stroke="#6a6a6a" stroke-width="1.200" fill="none"/>
<path d="M9.960 3.040A4.900 4.900 0 0 1 3.040 9.960" stroke="#e3e3e3" stroke-width="1.200" fill="none"/>
</svg>
<span id="t55" class="t" style="top:283px;font-size:12px;left:1809.80px;transform:scaleX(0.8007);transform-origin:0 50%;">REST GET</span>
<span id="t56" class="t" style="top:332px;font-size:12px;right:1253.25px;transform:scaleX(0.9400);transform-origin:100% 50%;">Parameters</span>
<div style="left:676px;top:327px;width:1214px;height:467px;background:#f5f5f5;border:1px solid #5a5a5a;"></div>
<div style="left:1872px;top:328px;width:17px;height:465px;background:#f0f0f0;"></div>
<div style="left:677px;top:777px;width:1212px;height:16px;background:#f0f0f0;"></div>
<div style="left:677px;top:776px;width:1195px;height:1px;background:#fbfbfb;"></div>
<div style="left:1872px;top:328px;width:1px;height:448px;background:#fdfdfd;"></div>
<div style="left:1872px;top:328px;width:17px;height:8px;background:#f6f6f6;border:1px solid #fff;border-bottom:none;"></div>
<div style="left:1873px;top:333px;width:16px;height:2px;background:#000;"></div>
<div style="left:1887px;top:328px;width:2px;height:7px;background:#000;"></div>
<div style="left:1872px;top:335px;width:17px;height:1px;background:#fff;"></div>
<svg style="left:1877px;top:341px;width:8px;height:5px" viewBox="0 0 8 5"><path d="M0.500 4.500L4 1l3.500 3.500" stroke="#b4b4b4" stroke-width="1.700" fill="none"/></svg>
<svg style="left:1877px;top:765px;width:8px;height:5px" viewBox="0 0 8 5"><path d="M0.500 0.500L4 4l3.500-3.500" stroke="#b4b4b4" stroke-width="1.700" fill="none"/></svg>
<svg style="left:682px;top:781px;width:5px;height:8px" viewBox="0 0 5 8"><path d="M4.500 0.500L1 4l3.500 3.500" stroke="#b4b4b4" stroke-width="1.700" fill="none"/></svg>
<svg style="left:1861px;top:781px;width:5px;height:8px" viewBox="0 0 5 8"><path d="M0.500 0.500L4 4l-3.500 3.500" stroke="#b4b4b4" stroke-width="1.700" fill="none"/></svg>
<div style="left:538px;top:823px;width:11px;height:11px;background:#fff;border:1px solid #1a1a1a;"></div>
<span id="t57" class="t" style="top:821px;font-size:12px;left:553.09px;transform:scaleX(1.0112);transform-origin:0 50%;">When importing an existing file, always output the original version of the file</span>
<div style="left:538px;top:871px;width:11px;height:11px;background:#fff;border:1px solid #1a1a1a;"></div>
<span id="t58" class="t" style="top:869px;font-size:12px;left:553.20px;transform:scaleX(0.9692);transform-origin:0 50%;">Show confirmation message before save</span>
<div style="left:538px;top:900px;width:11px;height:11px;background:#fff;border:1px solid #1a1a1a;"></div>
<span id="t59" class="t" style="top:898px;font-size:12px;left:552.50px;transform:scaleX(0.9397);transform-origin:0 50%;">Show message after save</span>
<div style="left:538px;top:931px;width:11px;height:11px;background:#fff;border:1px solid #1a1a1a;"></div>
<span id="t60" class="t" style="top:929px;font-size:12px;left:553.44px;transform:scaleX(0.9633);transform-origin:0 50%;">Always send a copy of a saved scan to:</span>
<span id="t61" class="t" style="top:842px;font-size:12px;color:#4a86c5;font-style:italic;left:557.09px;transform:scaleX(0.9884);transform-origin:0 50%;">Any splitting, rotation, post processing and other page modifications will be disregarded</span>
<div style="left:807px;top:869px;width:1077px;height:23px;background:#efefef;border:1px solid #5f5f5f;"></div>
<div style="left:807px;top:898px;width:1077px;height:23px;background:#efefef;border:1px solid #5f5f5f;"></div>
<div style="left:532px;top:955px;width:1374px;height:72px;border:1px solid #adadad;"></div>
<svg style="left:542.4px;top:970.4px;width:13px;height:13px" viewBox="0 0 13 13"><circle cx="6.5" cy="6.500" r="5.700" fill="#f2f2f2" stroke="#bcbcbc" stroke-width="1"/><circle cx="6.5" cy="6.500" r="1.900" fill="#a0a0a0"/></svg>
<svg style="left:542.4px;top:993.5px;width:13px;height:13px" viewBox="0 0 13 13"><circle cx="6.5" cy="6.500" r="5.700" fill="#f2f2f2" stroke="#bcbcbc" stroke-width="1"/></svg>
<span id="t62" class="t" style="top:969px;font-size:12px;color:#6a6a6a;left:558.86px;transform:scaleX(0.9507);transform-origin:0 50%;">User's e-mail address</span>
<span id="t63" class="t" style="top:992px;font-size:12px;color:#6a6a6a;left:558.85px;transform:scaleX(0.9685);transform-origin:0 50%;">Specific e-mail address</span>
<div style="left:695px;top:988px;width:427px;height:23px;background:#efefef;border:1px solid #5f5f5f;"></div>
</body></html>
